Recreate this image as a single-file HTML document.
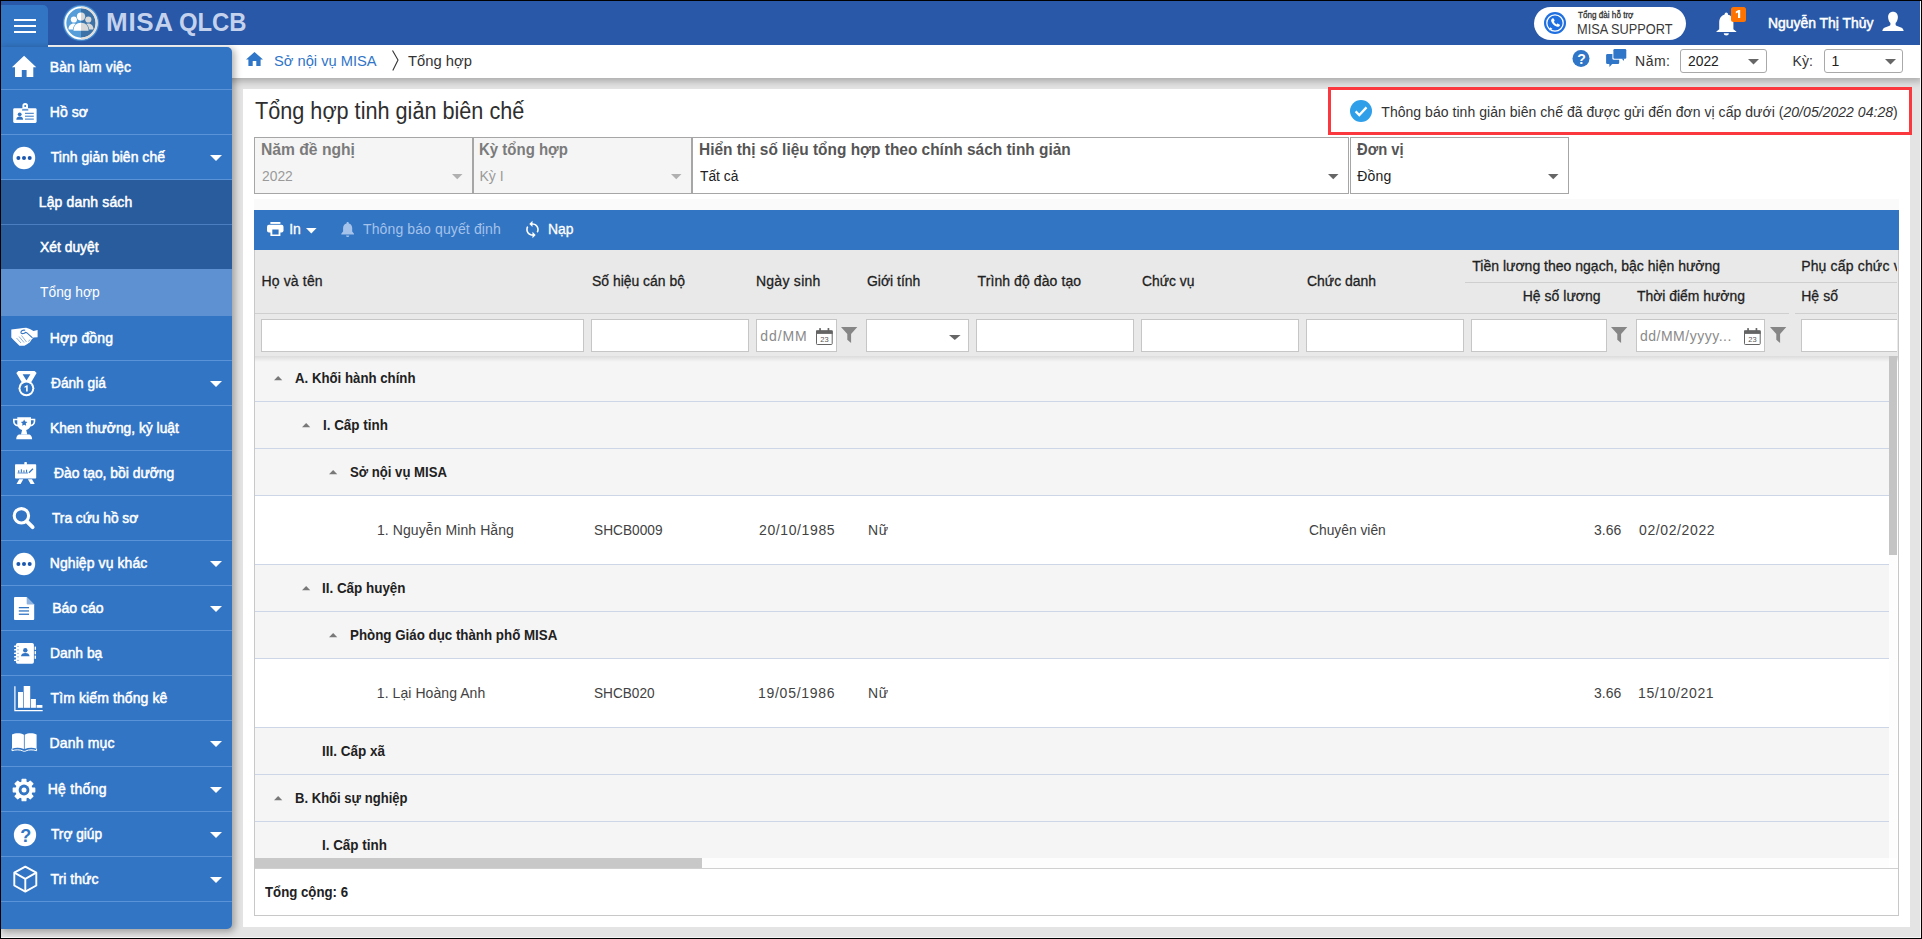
<!DOCTYPE html>
<html lang="vi"><head><meta charset="utf-8"><title>MISA QLCB</title>
<style>
html,body{margin:0;padding:0;}
body{width:1922px;height:939px;overflow:hidden;background:#e4e4e4;position:relative;font-family:"Liberation Sans", sans-serif;}
.a{position:absolute;display:block;}
.t{position:absolute;white-space:nowrap;line-height:20px;transform-origin:0 0;font-family:"Liberation Sans", sans-serif;}
svg{overflow:visible;}
</style></head>
<body>
<div class="a" style="left:1px;top:45px;width:1920px;height:33px;background:#fff;box-shadow:0 1px 8px 2px rgba(0,0,0,.28);"></div>
<div class="a" style="left:1px;top:1px;width:1920px;height:44px;background:#2858a7;"></div>
<div class="a" style="left:1px;top:5px;width:47px;height:42px;background:#3275c4;border-radius:0 5px 0 0;"></div>
<div class="a" style="left:14px;top:19px;width:22px;height:2px;background:#fff;"></div>
<div class="a" style="left:14px;top:25px;width:22px;height:2px;background:#fff;"></div>
<div class="a" style="left:14px;top:31px;width:22px;height:2px;background:#fff;"></div>
<svg class="a" style="left:63.4px;top:4.6px;" width="36" height="36" viewBox="0 0 36 36">
<defs><clipPath id="lc"><circle cx="18" cy="18" r="15"/></clipPath>
<radialGradient id="lg" cx="18" cy="18" r="18.600" gradientUnits="userSpaceOnUse"><stop offset=".9" stop-color="#5fa8e6"/><stop offset="1" stop-color="#4f9bdc" stop-opacity="0.1"/></radialGradient></defs>
<circle cx="18" cy="18" r="18.600" fill="url(#lg)"/>
<g clip-path="url(#lc)">
<rect x="0" y="0" width="18" height="36" fill="#559ed9"/>
<rect x="18" y="0" width="18" height="36" fill="#4887c4"/>
<g fill="#fff">
<circle cx="10.900" cy="14.500" r="3.100"/><circle cx="25.300" cy="14.500" r="3.100"/>
<path d="M5.500 24.500c0-3.700 2.200-5.900 5.300-5.900 1 0 1.900.2 2.600.7-1.700 1.300-2.700 3-3 5.200z"/>
<path d="M30.500 24.500c0-3.700-2.200-5.900-5.300-5.900-1 0-1.900.2-2.600.7 1.700 1.300 2.700 3 3 5.200z"/>
</g>
<circle cx="18" cy="11.600" r="4.700" fill="#559ed9"/>
<circle cx="18" cy="11.600" r="4.100" fill="#fff"/>
<path d="M9.800 25.700c0-5.300 3.300-8.500 8.200-8.500s8.200 3.200 8.200 8.500z" fill="#559ed9"/>
<path d="M10.500 25.700c0-5 3-7.900 7.500-7.900s7.500 2.900 7.500 7.900z" fill="#fff"/>
<rect x="18" y="0" width="18" height="36" fill="#000" opacity=".15"/>
</g>
<circle cx="18" cy="18" r="15.600" fill="none" stroke="#fff" stroke-width="1.900"/>
<path d="M18 2.400A15.600 15.600 0 0 1 18 33.600" fill="none" stroke="#e2ddd8" stroke-width="1.900"/>
</svg>
<span class="t" style="left:106.1px;top:12px;font-size:26px;font-weight:700;color:#c4d2ed;letter-spacing:0.66px;">MISA</span>
<span class="t" style="left:179.48px;top:12px;font-size:26px;font-weight:700;color:#c4d2ed;transform:scaleX(0.9168);">QLCB</span>
<div class="a" style="left:1534px;top:7px;width:152px;height:33px;background:#fff;border-radius:17px;"></div>
<svg class="a" style="left:1543px;top:11px;" width="24" height="24" viewBox="0 0 24 24">
<circle cx="12" cy="12" r="11" fill="#1f6fe0"/>
<circle cx="12" cy="12" r="8.200" fill="none" stroke="#fff" stroke-width="1.300"/>
<path d="M6.200 19.500l1-3.200 2.400 1.600z" fill="#fff"/>
<path d="M9.300 7.600c.5-.5 1.100-.4 1.400.1l.8 1.400c.2.400.1.800-.2 1.100l-.5.500c.6 1.200 1.500 2.100 2.700 2.700l.5-.5c.3-.3.700-.4 1.100-.2l1.400.8c.5.300.6.900.1 1.400-.8.900-1.900 1.100-3 .7-2.500-.9-4.500-2.900-5.400-5.400-.3-1 .2-1.800 1.100-2.600z" fill="#fff"/>
</svg>
<span class="t" style="left:1577.64px;top:5px;font-size:9px;-webkit-text-stroke:0.3px;color:#333;transform:scaleX(0.9024);">Tổng đài hỗ trợ</span>
<span class="t" style="left:1576.99px;top:19px;font-size:14px;color:#3a3a3a;transform:scaleX(0.9125);">MISA SUPPORT</span>
<svg class="a" style="left:1716px;top:12px;" width="21" height="24" viewBox="0 0 21 24">
<circle cx="10.300" cy="2.300" r="1.700" fill="#fff"/>
<path d="M3.200 17.200V10.700C3.200 5.600 6 2.600 10.300 2.600S17.400 5.600 17.400 10.700V17.200L20.300 19.500V20.100H.4V19.500z" fill="#fff"/>
<path d="M7.700 21.300H12.900A2.600 2.200 0 0 1 7.700 21.300z" fill="#fff"/>
</svg>
<div class="a" style="left:1731px;top:7px;width:15px;height:15px;background:#ff7300;border-radius:2.500px;"></div>
<svg class="a" style="left:1735px;top:9px;" width="6" height="10" viewBox="0 0 6 10"><path d="M3.400 1H5.200V9H3V3.600L.8 4.400V2.600z" fill="#fff"/></svg>
<span class="t" style="left:1767.55px;top:13px;font-size:14px;-webkit-text-stroke:0.5px;color:#fff;transform:scaleX(0.9943);">Nguyễn Thị Thủy</span>
<svg class="a" style="left:1882px;top:11px;" width="22" height="21" viewBox="0 0 22 21">
<path d="M11 .8c3 0 4.900 2.200 4.900 5.300 0 2.600-1 4.800-2.300 5.900v1.600c0 .5.300.9.800 1.100l4.600 1.800c1.700.700 2.500 1.900 2.700 3.500H.300c.2-1.600 1-2.800 2.700-3.500l4.600-1.800c.5-.2.800-.6.800-1.100V12c-1.300-1.100-2.300-3.300-2.300-5.900C6.100 3 8 .8 11 .8z" fill="#fff"/>
</svg>
<svg class="a" style="left:246px;top:52px;" width="17" height="14" viewBox="0 0 17 14"><path d="M8.500 0L17 7.600h-2.400V14H10.300V9H6.700v5H2.400V7.600H0z" fill="#2f75c8"/></svg>
<span class="t" style="left:274px;top:51px;font-size:15px;color:#2f75c8;transform:scaleX(0.9783);">Sở nội vụ MISA</span>
<svg class="a" style="left:391px;top:50px;" width="9" height="21" viewBox="0 0 9 21"><path d="M1.500 .5L7 10 1.800 20.500" fill="none" stroke="#333" stroke-width="1.100"/></svg>
<span class="t" style="left:407.5px;top:51px;font-size:15px;color:#333;transform:scaleX(0.9840);">Tổng hợp</span>
<svg class="a" style="left:1572px;top:50px;" width="18" height="18" viewBox="0 0 18 18"><circle cx="9" cy="8.500" r="8.500" fill="#2f75c8"/></svg>
<span class="t" style="left:1577.3px;top:49px;font-size:14px;font-weight:700;color:#fff;">?</span>
<svg class="a" style="left:1606px;top:49px;" width="21" height="19" viewBox="0 0 21 19">
<rect x=".1" y="5" width="13.100" height="10" rx="1.300" fill="#2f75c8"/>
<path d="M3.300 14.800H6.400L3.500 18z" fill="#2f75c8"/>
<rect x="6.400" y="-1" width="15" height="11.800" rx="1.500" fill="#fff"/>
<path d="M15 9.500H18.500V13z" fill="#fff"/>
<rect x="7.400" y="0" width="12.900" height="9.800" rx="1.300" fill="#2f75c8"/>
<path d="M15.600 9.600H18V12.100z" fill="#2f75c8"/>
</svg>
<span class="t" style="left:1635.1px;top:51px;font-size:14px;color:#333;letter-spacing:0.48px;">Năm:</span>
<div class="a" style="left:1680px;top:49px;width:87px;height:24px;background:#fff;border:1px solid #a9a9a9;border-radius:3px;box-sizing:border-box;"></div>
<span class="t" style="left:1688px;top:51px;font-size:14px;color:#212121;transform:scaleX(0.9886);">2022</span>
<svg class="a" style="left:1748px;top:59px;" width="11" height="5.5" viewBox="0 0 11 5.5"><path d="M0 0H11L5.5 5.5Z" fill="#666"/></svg>
<span class="t" style="left:1792.6px;top:51px;font-size:14px;color:#333;letter-spacing:0.03px;">Kỳ:</span>
<div class="a" style="left:1824px;top:49px;width:79px;height:24px;background:#fff;border:1px solid #a9a9a9;border-radius:3px;box-sizing:border-box;"></div>
<span class="t" style="left:1831.6px;top:51px;font-size:14px;color:#212121;">1</span>
<svg class="a" style="left:1884.5px;top:59px;" width="11" height="5.5" viewBox="0 0 11 5.5"><path d="M0 0H11L5.5 5.5Z" fill="#666"/></svg>
<div class="a" style="left:1px;top:47px;width:231px;height:882px;background:#3275c4;border-radius:0 5px 5px 0;box-shadow:2px 2px 7px 1px rgba(0,0,0,.3);"></div>
<div class="a" style="left:1px;top:180px;width:231px;height:89px;background:#285c9c;"></div>
<div class="a" style="left:1px;top:269px;width:231px;height:47px;background:#5d91d2;"></div>
<div class="a" style="left:1px;top:89px;width:231px;height:1px;background:#5b93d8;"></div>
<div class="a" style="left:1px;top:134px;width:231px;height:1px;background:#5b93d8;"></div>
<div class="a" style="left:1px;top:179px;width:231px;height:1px;background:#5b93d8;"></div>
<div class="a" style="left:1px;top:224px;width:231px;height:1px;background:#4a7ec0;"></div>
<div class="a" style="left:1px;top:360px;width:231px;height:1px;background:#5b93d8;"></div>
<div class="a" style="left:1px;top:405px;width:231px;height:1px;background:#5b93d8;"></div>
<div class="a" style="left:1px;top:450px;width:231px;height:1px;background:#5b93d8;"></div>
<div class="a" style="left:1px;top:495px;width:231px;height:1px;background:#5b93d8;"></div>
<div class="a" style="left:1px;top:540px;width:231px;height:1px;background:#5b93d8;"></div>
<div class="a" style="left:1px;top:585px;width:231px;height:1px;background:#5b93d8;"></div>
<div class="a" style="left:1px;top:630px;width:231px;height:1px;background:#5b93d8;"></div>
<div class="a" style="left:1px;top:675px;width:231px;height:1px;background:#5b93d8;"></div>
<div class="a" style="left:1px;top:720px;width:231px;height:1px;background:#5b93d8;"></div>
<div class="a" style="left:1px;top:766px;width:231px;height:1px;background:#5b93d8;"></div>
<div class="a" style="left:1px;top:811px;width:231px;height:1px;background:#5b93d8;"></div>
<div class="a" style="left:1px;top:856px;width:231px;height:1px;background:#5b93d8;"></div>
<div class="a" style="left:1px;top:901px;width:231px;height:1px;background:#5b93d8;"></div>
<span class="t" style="left:49.75px;top:57px;font-size:14px;-webkit-text-stroke:0.5px;color:#fff;letter-spacing:0.1px;">Bàn làm việc</span>
<span class="t" style="left:49.75px;top:102px;font-size:14px;-webkit-text-stroke:0.5px;color:#fff;letter-spacing:0.05px;">Hồ sơ</span>
<span class="t" style="left:50.75px;top:147px;font-size:14px;-webkit-text-stroke:0.5px;color:#fff;letter-spacing:0.02px;">Tinh giản biên chế</span>
<span class="t" style="left:38.75px;top:192px;font-size:14px;-webkit-text-stroke:0.5px;color:#fff;letter-spacing:0.14px;">Lập danh sách</span>
<span class="t" style="left:39.75px;top:237px;font-size:14px;-webkit-text-stroke:0.5px;color:#fff;transform:scaleX(0.9906);">Xét duyệt</span>
<span class="t" style="left:39.5px;top:282px;font-size:14px;color:#fff;transform:scaleX(0.9874);">Tổng hợp</span>
<span class="t" style="left:49.75px;top:328px;font-size:14px;-webkit-text-stroke:0.5px;color:#fff;letter-spacing:0.17px;">Hợp đồng</span>
<span class="t" style="left:50.74px;top:373px;font-size:14px;-webkit-text-stroke:0.5px;color:#fff;transform:scaleX(0.9779);">Đánh giá</span>
<span class="t" style="left:49.76px;top:418px;font-size:14px;-webkit-text-stroke:0.5px;color:#fff;transform:scaleX(0.9867);">Khen thưởng, kỷ luật</span>
<span class="t" style="left:53.75px;top:463px;font-size:14px;-webkit-text-stroke:0.5px;color:#fff;transform:scaleX(0.9916);">Đào tạo, bồi dưỡng</span>
<span class="t" style="left:51.74px;top:508px;font-size:14px;-webkit-text-stroke:0.5px;color:#fff;transform:scaleX(0.9787);">Tra cứu hồ sơ</span>
<span class="t" style="left:49.75px;top:553px;font-size:14px;-webkit-text-stroke:0.5px;color:#fff;letter-spacing:0.08px;">Nghiệp vụ khác</span>
<span class="t" style="left:52.25px;top:598px;font-size:14px;-webkit-text-stroke:0.5px;color:#fff;">Báo cáo</span>
<span class="t" style="left:49.56px;top:643px;font-size:14px;-webkit-text-stroke:0.5px;color:#fff;transform:scaleX(0.9878);">Danh bạ</span>
<span class="t" style="left:50.55px;top:688px;font-size:14px;-webkit-text-stroke:0.5px;color:#fff;letter-spacing:0.1px;">Tìm kiếm thống kê</span>
<span class="t" style="left:49.55px;top:733px;font-size:14px;-webkit-text-stroke:0.5px;color:#fff;letter-spacing:0.17px;">Danh mục</span>
<span class="t" style="left:47.65px;top:779px;font-size:14px;-webkit-text-stroke:0.5px;color:#fff;letter-spacing:0.3px;">Hệ thống</span>
<span class="t" style="left:50.54px;top:824px;font-size:14px;-webkit-text-stroke:0.5px;color:#fff;transform:scaleX(0.9764);">Trợ giúp</span>
<span class="t" style="left:50.55px;top:869px;font-size:14px;-webkit-text-stroke:0.5px;color:#fff;letter-spacing:0.02px;">Tri thức</span>
<svg class="a" style="left:209.5px;top:154.5px;" width="12" height="6" viewBox="0 0 12 6"><path d="M0 0H12L6.0 6Z" fill="#fff"/></svg>
<svg class="a" style="left:209.5px;top:380.5px;" width="12" height="6" viewBox="0 0 12 6"><path d="M0 0H12L6.0 6Z" fill="#fff"/></svg>
<svg class="a" style="left:209.5px;top:560.5px;" width="12" height="6" viewBox="0 0 12 6"><path d="M0 0H12L6.0 6Z" fill="#fff"/></svg>
<svg class="a" style="left:209.5px;top:605.5px;" width="12" height="6" viewBox="0 0 12 6"><path d="M0 0H12L6.0 6Z" fill="#fff"/></svg>
<svg class="a" style="left:209.5px;top:740.5px;" width="12" height="6" viewBox="0 0 12 6"><path d="M0 0H12L6.0 6Z" fill="#fff"/></svg>
<svg class="a" style="left:209.5px;top:786.5px;" width="12" height="6" viewBox="0 0 12 6"><path d="M0 0H12L6.0 6Z" fill="#fff"/></svg>
<svg class="a" style="left:209.5px;top:831.5px;" width="12" height="6" viewBox="0 0 12 6"><path d="M0 0H12L6.0 6Z" fill="#fff"/></svg>
<svg class="a" style="left:209.5px;top:876.5px;" width="12" height="6" viewBox="0 0 12 6"><path d="M0 0H12L6.0 6Z" fill="#fff"/></svg>
<svg class="a" style="left:12px;top:56px;" width="24" height="21" viewBox="0 0 24 21"><path d="M12.100 -.2L24.300 11.300H21.300V20.900H14.600V14H9.800V20.900H3V11.300H-.1z" fill="#fff"/></svg>
<svg class="a" style="left:13px;top:103px;" width="24" height="20" viewBox="0 0 24 20">
<path d="M9.400 5.500V2.700a2.800 2.800 0 0 1 5.600 0V5.500z" fill="#fff"/><circle cx="12.200" cy="2.900" r="1" fill="#3275c4"/>
<rect x=".2" y="5.200" width="23.400" height="14.700" rx="1.300" fill="#fff"/>
<g fill="#3275c4"><rect x="9" y="6.300" width="6.400" height="1.200" rx=".6"/>
<circle cx="6.700" cy="11.300" r="1.900"/><path d="M3.300 16.800c0-2.200 1.500-3.300 3.400-3.300s3.400 1.100 3.400 3.300z"/>
<rect x="12" y="9.800" width="8.800" height="1"/><rect x="12" y="12.700" width="8.800" height="1"/><rect x="12" y="15.600" width="8.800" height="1"/></g>
</svg>
<svg class="a" style="left:12px;top:145.8px;" width="24" height="24" viewBox="0 0 24 24"><circle cx="12" cy="12" r="11.200" fill="#fff"/><g fill="#1b57ae"><circle cx="6.400" cy="12" r="2"/><circle cx="12" cy="12" r="2"/><circle cx="17.700" cy="12" r="2"/></g></svg>
<svg class="a" style="left:12px;top:551.8px;" width="24" height="24" viewBox="0 0 24 24"><circle cx="12" cy="12" r="11.200" fill="#fff"/><g fill="#1b57ae"><circle cx="6.400" cy="12" r="2"/><circle cx="12" cy="12" r="2"/><circle cx="17.700" cy="12" r="2"/></g></svg>
<svg class="a" style="left:11px;top:327px;" width="27" height="20" viewBox="0 0 27 20">
<path d="M.3 2.500L8.500 1.600 12 .9 15.200 .7 18.900 2 22.500 3.900 26.600 3V10.200L22.500 10.600 20.700 12.500 18.900 15.200 16 17.300 13.400 18.800H8.500L2.600 12.900 .3 10.600z" fill="#fff"/>
<path d="M9.800 5.800C10 3.900 12 2.600 14.200 3.300M9.800 5.800c1.500 1.300 3.500.9 4.600-.4l1.300.3 5.800 5.200" fill="none" stroke="#3275c4" stroke-width="1.100"/>
<path d="M5.500 11l4.500 5M8 9.500l5 6M10.500 8.500l5 6.500M19 12.500l-1.500 2" fill="none" stroke="#3275c4" stroke-width=".7" opacity=".8"/>
</svg>
<svg class="a" style="left:16px;top:371px;" width="21" height="26" viewBox="0 0 21 26">
<path d="M.3 2L2.300 .1H18.600L20.600 2 14.300 12.800H6.700z" fill="#fff"/>
<path d="M6.600 3.300H14.400L10.500 9.600z" fill="#3275c4"/>
<circle cx="10.400" cy="17.300" r="7.900" fill="#fff"/><circle cx="10.400" cy="17.300" r="5.900" fill="#3275c4"/>
<path d="M8.600 15.500L10.900 14.200H11.700V20.500H10.100V16.100L8.600 16.900z" fill="#fff"/>
</svg>
<svg class="a" style="left:13px;top:417px;" width="22.3" height="22.3" viewBox="0 0 22.3 22.3">
<path d="M4.300 .2H18V1.700H22.300V4.300c0 2.900-2 4.900-4.900 5.300-.9 1.700-2.300 2.900-4.200 3.400L14.300 17.400H8L9.100 13c-1.900-.5-3.300-1.700-4.200-3.400C2 9.200 0 7.200 0 4.300V1.700H4.300z" fill="#fff"/>
<path d="M5.800 17.600H16.500c1.700.8 2.500 2.400 2.600 4.600H3.200c.1-2.200.9-3.800 2.600-4.600z" fill="#fff"/>
<path d="M1.600 3.300H4.300V7.700C2.700 7.300 1.600 6 1.600 4.300zM20.700 3.300H18V7.700c1.600-.4 2.700-1.700 2.700-3.400z" fill="#3275c4"/>
<path d="M11.150 2.500l1 2.100 2.300.3-1.700 1.600.4 2.300-2-1.100-2 1.100.4-2.300-1.700-1.600 2.300-.3z" fill="#3275c4"/>
</svg>
<svg class="a" style="left:14.8px;top:461.7px;" width="21.2" height="22.2" viewBox="0 0 21.2 22.2">
<rect x="9.300" y="0" width="2.600" height="3" rx=".8" fill="#fff"/>
<rect x="0" y="2.200" width="21.200" height="14.400" rx=".8" fill="#fff"/>
<path d="M4.200 17.200H8.300L5.600 22.100H1.500zM12.900 17.200h4.100L19.700 22.100h-4.100z" fill="#fff"/>
<g fill="#3275c4"><rect x="3.200" y="8.300" width="1.100" height="2.300"/><rect x="5.800" y="7.300" width="1.100" height="3.300"/><rect x="8.400" y="8.300" width="1.100" height="2.300"/><rect x="11" y="7.700" width="1.100" height="2.900"/><path d="M13.500 10.300l4-4 .9.900-4 4z"/><rect x="2.500" y="10.600" width="10.500" height=".8"/></g>
</svg>
<svg class="a" style="left:12px;top:507px;" width="23" height="23" viewBox="0 0 23 23"><circle cx="9.400" cy="8.800" r="7.200" fill="none" stroke="#fff" stroke-width="3.100"/><path d="M14.800 14.300l5.800 5.800" stroke="#fff" stroke-width="3.900" stroke-linecap="round"/></svg>
<svg class="a" style="left:13.9px;top:596.9px;" width="20.2" height="23" viewBox="0 0 20.2 23">
<path d="M1 0H12.700L20.200 7.500V22a1 1 0 0 1-1 1H1a1 1 0 0 1-1-1V1a1 1 0 0 1 1-1z" fill="#fff"/>
<path d="M12.700 0V6.500a1 1 0 0 0 1 1H20.200z" fill="#3275c4" opacity=".55"/>
<g fill="#3275c4"><rect x="4.800" y="10" width="10.200" height="1.300"/><rect x="4.800" y="13.300" width="10.200" height="1.300"/><rect x="4.800" y="16.600" width="10.200" height="1.300"/></g>
</svg>
<svg class="a" style="left:13.9px;top:642.9px;" width="22" height="21" viewBox="0 0 22 21">
<rect x="1.900" y="0" width="18" height="20.800" rx="1.800" fill="#fff"/>
<g fill="#fff"><rect x="0" y="2.600" width="3.500" height="1.500" rx=".7"/><rect x="0" y="6.100" width="3.500" height="1.500" rx=".7"/><rect x="0" y="9.600" width="3.500" height="1.500" rx=".7"/><rect x="0" y="13.100" width="3.500" height="1.500" rx=".7"/><rect x="0" y="16.600" width="3.500" height="1.500" rx=".7"/>
<rect x="20.600" y="3.600" width="1.400" height="3.200"/><rect x="20.600" y="8.100" width="1.400" height="3.200"/><rect x="20.600" y="12.600" width="1.400" height="3.200"/></g>
<g fill="#3275c4"><rect x="3.500" y="2.900" width="1" height=".9"/><rect x="3.500" y="6.400" width="1" height=".9"/><rect x="3.500" y="9.900" width="1" height=".9"/><rect x="3.500" y="13.400" width="1" height=".9"/><rect x="3.500" y="16.900" width="1" height=".9"/>
<circle cx="11.300" cy="7.300" r="2.200"/><path d="M7 13.300c0-2.300 1.900-3.400 4.300-3.400s4.300 1.100 4.300 3.400z"/></g>
</svg>
<svg class="a" style="left:14px;top:685px;" width="29" height="27" viewBox="0 0 29 27">
<path d="M.9 1.300V25.700H28.700" fill="none" stroke="#fff" stroke-width="1.200"/>
<g fill="#fff"><rect x="4" y="7" width="5" height="15.800"/><rect x="9.700" y="1" width="6.500" height="21.800"/><rect x="16.900" y="14" width="5" height="8.800"/><rect x="22.600" y="20" width="5.800" height="2.800"/></g>
</svg>
<svg class="a" style="left:11.5px;top:733px;" width="24.6" height="18.6" viewBox="0 0 24.6 18.6">
<path d="M0 1.600C3.500 -.3 8.300 -.2 11.900 1.700V16C8.300 14.600 3.500 14.500 0 15.700z" fill="#fff"/>
<path d="M24.600 1.600C21.100 -.3 16.300 -.2 12.700 1.700V16c3.600-1.400 8.400-1.500 11.900-.3z" fill="#fff"/>
<path d="M0 15.700V17.700C3.500 16.500 8 16.600 10.500 17.800c.8.700 2.800.7 3.600 0 2.500-1.200 7-1.300 10.500-.1V15.700" fill="none" stroke="#fff" stroke-width="1"/>
</svg>
<svg class="a" style="left:12px;top:778px;" width="24" height="24" viewBox="0 0 24 24"><path d="M9.99 4.15L10.13 1.26L13.87 1.26L14.01 4.15L16.12 5.03L18.27 3.08L20.92 5.73L18.97 7.88L19.85 9.99L22.74 10.13L22.74 13.87L19.85 14.01L18.97 16.12L20.92 18.27L18.27 20.92L16.12 18.97L14.01 19.85L13.87 22.74L10.13 22.74L9.99 19.85L7.88 18.97L5.73 20.92L3.08 18.27L5.03 16.12L4.15 14.01L1.26 13.87L1.26 10.13L4.15 9.99L5.03 7.88L3.08 5.73L5.73 3.08L7.88 5.03Z" fill="#fff" stroke="#fff" stroke-width="1.200" stroke-linejoin="round"/><circle cx="12" cy="12" r="5.400" fill="#3275c4"/><circle cx="12" cy="12" r="2.500" fill="#fff"/></svg>
<svg class="a" style="left:13px;top:823px;" width="24" height="24" viewBox="0 0 24 24"><circle cx="12" cy="12" r="11.150" fill="#fff"/></svg>
<span class="t" style="left:20.2px;top:826px;font-size:18px;font-weight:700;color:#3275c4;">?</span>
<svg class="a" style="left:13px;top:866px;" width="24" height="27" viewBox="0 0 24 27">
<path d="M12.300 .6L23.300 6.700V19.500L12.300 25.600 1.300 19.500V6.700z" fill="none" stroke="#fff" stroke-width="1.900" stroke-linejoin="round"/>
<path d="M1.300 6.700l11 6.100 11-6.100M12.300 12.800V25.600" fill="none" stroke="#fff" stroke-width="1.900" stroke-linejoin="round"/>
</svg>
<div class="a" style="left:243px;top:89px;width:1667px;height:838px;background:#fff;"></div>
<span class="t" style="left:254.5px;top:101px;font-size:23px;color:#2e2e2e;transform:scaleX(0.9410);">Tổng hợp tinh giản biên chế</span>
<svg class="a" style="left:1350px;top:100px;" width="22" height="22" viewBox="0 0 22 22"><circle cx="11" cy="11" r="11" fill="#2f9fea"/><path d="M5.600 11.400l3.700 3.600 7.200-7.600" fill="none" stroke="#fff" stroke-width="2.300"/></svg>
<span class="t" style="left:1381.3px;top:102px;font-size:14px;color:#333;letter-spacing:0.04px;">Thông báo tinh giản biên chế đã được gửi đến đơn vị cấp dưới (<i>20/05/2022 04:28</i>)</span>
<div class="a" style="left:254px;top:137px;width:219px;height:57px;background:#f5f5f5;box-sizing:border-box;border:1px solid #a6a6a6;"></div>
<div class="a" style="left:473px;top:137px;width:219px;height:57px;background:#f5f5f5;box-sizing:border-box;border:1px solid #a6a6a6;"></div>
<div class="a" style="left:692px;top:137px;width:657px;height:57px;background:#fff;box-sizing:border-box;border:1px solid #a6a6a6;"></div>
<div class="a" style="left:1350px;top:137px;width:219px;height:57px;background:#fff;box-sizing:border-box;border:1px solid #a6a6a6;"></div>
<span class="t" style="left:260.62px;top:140px;font-size:16px;font-weight:700;color:#7b7b7b;transform:scaleX(0.9782);">Năm đề nghị</span>
<span class="t" style="left:261.6px;top:166px;font-size:14px;color:#9a9a9a;transform:scaleX(0.9886);">2022</span>
<svg class="a" style="left:452.3px;top:174px;" width="10.5" height="5.2" viewBox="0 0 10.5 5.2"><path d="M0 0H10.5L5.25 5.2Z" fill="#b0b0b0"/></svg>
<span class="t" style="left:479.46px;top:140px;font-size:16px;font-weight:700;color:#7b7b7b;transform:scaleX(0.9369);">Kỳ tổng hợp</span>
<span class="t" style="left:479.4px;top:166px;font-size:14px;color:#9a9a9a;letter-spacing:0.02px;">Kỳ I</span>
<svg class="a" style="left:671.3px;top:174px;" width="10.5" height="5.2" viewBox="0 0 10.5 5.2"><path d="M0 0H10.5L5.25 5.2Z" fill="#b0b0b0"/></svg>
<span class="t" style="left:699.04px;top:140px;font-size:16px;font-weight:700;color:#555;transform:scaleX(0.9640);">Hiển thị số liệu tổng hợp theo chính sách tinh giản</span>
<span class="t" style="left:700px;top:166px;font-size:14px;color:#212121;transform:scaleX(0.9868);">Tất cả</span>
<svg class="a" style="left:1328px;top:174px;" width="10.5" height="5.2" viewBox="0 0 10.5 5.2"><path d="M0 0H10.5L5.25 5.2Z" fill="#666"/></svg>
<span class="t" style="left:1357.3px;top:140px;font-size:16px;font-weight:700;color:#555;transform:scaleX(0.9231);">Đơn vị</span>
<span class="t" style="left:1357.3px;top:166px;font-size:14px;color:#212121;letter-spacing:0.21px;">Đồng</span>
<svg class="a" style="left:1548px;top:174px;" width="10.5" height="5.2" viewBox="0 0 10.5 5.2"><path d="M0 0H10.5L5.25 5.2Z" fill="#666"/></svg>
<div class="a" style="left:254px;top:199px;width:1645px;height:11px;background:#fafafa;"></div>
<div class="a" style="left:254px;top:210px;width:1645px;height:40px;background:#3275c3;"></div>
<div class="a" style="left:254px;top:250px;width:1645px;height:106px;background:#e9e9e9;"></div>
<div class="a" style="left:254px;top:356px;width:1645px;height:512px;background:#fff;"></div>
<svg class="a" style="left:267px;top:222px;" width="17" height="15" viewBox="0 0 17 15">
<rect x="3.400" y="0" width="10" height="1.900" fill="#fff"/>
<rect x="0" y="2.800" width="16.500" height="7.800" rx="2" fill="#fff"/>
<rect x="3.400" y="6.900" width="10" height="7.100" fill="#fff"/>
<rect x="5.300" y="7.500" width="6.300" height="5" fill="#3275c3"/>
</svg>
<span class="t" style="left:289.15px;top:219px;font-size:14px;-webkit-text-stroke:0.3px;color:#fff;letter-spacing:0.01px;">In</span>
<svg class="a" style="left:305.6px;top:228.3px;" width="10.6" height="5.5" viewBox="0 0 10.6 5.5"><path d="M0 0H10.6L5.3 5.5Z" fill="#fff"/></svg>
<svg class="a" style="left:341px;top:222px;" width="14" height="16" viewBox="0 0 14 16"><path transform="scale(.95 .96)" d="M7 0c.7 0 1.200.5 1.200 1.100v.4c2.200.5 3.600 2.400 3.600 4.800v3.700l1.900 2.200v.7H.300v-.7l1.900-2.200V6.300c0-2.400 1.400-4.300 3.600-4.800v-.4C5.800.5 6.300 0 7 0zM5.300 14h3.400a1.700 1.600 0 0 1-3.400 0z" fill="#a4c2ea"/></svg>
<span class="t" style="left:363px;top:219px;font-size:14px;color:#a4c2ea;letter-spacing:0.12px;">Thông báo quyết định</span>
<svg class="a" style="left:522.8px;top:220.2px;" width="19" height="19" viewBox="0 0 19 19"><path transform="scale(.79)" d="M12 4V1L8 5l4 4V6c3.310 0 6 2.690 6 6 0 1.010-.25 1.970-.7 2.800l1.460 1.460C19.540 15.030 20 13.570 20 12c0-4.420-3.580-8-8-8zm0 14c-3.310 0-6-2.690-6-6 0-1.010.25-1.970.7-2.800L5.240 7.740C4.460 8.970 4 10.430 4 12c0 4.420 3.580 8 8 8v3l4-4-4-4v3z" fill="#fff"/></svg>
<span class="t" style="left:547.86px;top:219px;font-size:14px;-webkit-text-stroke:0.3px;color:#fff;transform:scaleX(0.9922);">Nạp</span>
<span class="t" style="left:261.44px;top:271px;font-size:14px;-webkit-text-stroke:0.28px;color:#212121;letter-spacing:0.16px;">Họ và tên</span>
<span class="t" style="left:592.14px;top:271px;font-size:14px;-webkit-text-stroke:0.28px;color:#212121;transform:scaleX(0.9947);">Số hiệu cán bộ</span>
<span class="t" style="left:755.94px;top:271px;font-size:14px;-webkit-text-stroke:0.28px;color:#212121;letter-spacing:0.27px;">Ngày sinh</span>
<span class="t" style="left:867.04px;top:271px;font-size:14px;-webkit-text-stroke:0.28px;color:#212121;transform:scaleX(0.9957);">Giới tính</span>
<span class="t" style="left:977.54px;top:271px;font-size:14px;-webkit-text-stroke:0.28px;color:#212121;letter-spacing:0.09px;">Trình độ đào tạo</span>
<span class="t" style="left:1142.04px;top:271px;font-size:14px;-webkit-text-stroke:0.28px;color:#212121;transform:scaleX(0.9897);">Chức vụ</span>
<span class="t" style="left:1306.84px;top:271px;font-size:14px;-webkit-text-stroke:0.28px;color:#212121;transform:scaleX(0.9957);">Chức danh</span>
<span class="t" style="left:1472.24px;top:256px;font-size:14px;-webkit-text-stroke:0.28px;color:#212121;letter-spacing:0.01px;">Tiền lương theo ngạch, bậc hiện hưởng</span>
<span class="t" style="left:1522.64px;top:286px;font-size:14px;-webkit-text-stroke:0.28px;color:#212121;letter-spacing:0.03px;">Hệ số lương</span>
<span class="t" style="left:1637.44px;top:286px;font-size:14px;-webkit-text-stroke:0.28px;color:#212121;transform:scaleX(0.9930);">Thời điểm hưởng</span>
<div class="a" style="left:1794px;top:250px;width:103px;height:106px;overflow:hidden;" id="clipcol">
<span class="t" style="left:7.14px;top:6px;font-size:14px;-webkit-text-stroke:0.28px;color:#212121;letter-spacing:0.17px;">Phụ cấp chức vụ</span>
<span class="t" style="left:7.14px;top:36px;font-size:14px;-webkit-text-stroke:0.28px;color:#212121;letter-spacing:0.08px;">Hệ số</span>
<div class="a" style="left:7px;top:69px;width:160px;height:33px;background:#fff;border:1px solid #c6c6c6;box-sizing:border-box;"></div>
</div>
<div class="a" style="left:1465px;top:282px;width:432px;height:1px;background:#cfcfcf;"></div>
<div class="a" style="left:254px;top:313px;width:1535px;height:1px;background:#cfcfcf;"></div>
<div class="a" style="left:1795px;top:313px;width:102px;height:1px;background:#cfcfcf;"></div>
<div class="a" style="left:261px;top:319px;width:323px;height:33px;background:#fff;box-sizing:border-box;border:1px solid #c6c6c6;"></div>
<div class="a" style="left:591px;top:319px;width:158px;height:33px;background:#fff;box-sizing:border-box;border:1px solid #c6c6c6;"></div>
<div class="a" style="left:756px;top:319px;width:81px;height:33px;background:#fff;box-sizing:border-box;border:1px solid #c6c6c6;"></div>
<div class="a" style="left:866px;top:319px;width:103px;height:33px;background:#fff;box-sizing:border-box;border:1px solid #c6c6c6;"></div>
<div class="a" style="left:976px;top:319px;width:158px;height:33px;background:#fff;box-sizing:border-box;border:1px solid #c6c6c6;"></div>
<div class="a" style="left:1141px;top:319px;width:158px;height:33px;background:#fff;box-sizing:border-box;border:1px solid #c6c6c6;"></div>
<div class="a" style="left:1306px;top:319px;width:158px;height:33px;background:#fff;box-sizing:border-box;border:1px solid #c6c6c6;"></div>
<div class="a" style="left:1471px;top:319px;width:136px;height:33px;background:#fff;box-sizing:border-box;border:1px solid #c6c6c6;"></div>
<div class="a" style="left:1636px;top:319px;width:129px;height:33px;background:#fff;box-sizing:border-box;border:1px solid #c6c6c6;"></div>
<span class="t" style="left:760.3px;top:326px;font-size:14px;color:#8a8a8a;letter-spacing:0.89px;">dd/MM</span>
<span class="t" style="left:1640px;top:326px;font-size:14px;color:#8a8a8a;letter-spacing:0.5px;">dd/MM/yyyy...</span>
<svg class="a" style="left:816.1px;top:328px;" width="17" height="17" viewBox="0 0 17 17">
<rect x="0.500" y="2.900" width="15.700" height="13.600" rx=".8" fill="#fff" stroke="#646464" stroke-width="1"/>
<rect x="0" y="2.400" width="16.700" height="3.500" fill="#646464"/>
<g fill="#646464"><rect x="3.200" y="0" width="1.700" height="3.600" rx=".6"/><rect x="11.600" y="0" width="1.700" height="3.600" rx=".6"/></g>
<text x="8.400" y="14.300" font-family="Liberation Sans" font-size="7.500" text-anchor="middle" fill="#555">23</text>
</svg>
<svg class="a" style="left:1743.6px;top:328px;" width="17" height="17" viewBox="0 0 17 17">
<rect x="0.500" y="2.900" width="15.700" height="13.600" rx=".8" fill="#fff" stroke="#646464" stroke-width="1"/>
<rect x="0" y="2.400" width="16.700" height="3.500" fill="#646464"/>
<g fill="#646464"><rect x="3.200" y="0" width="1.700" height="3.600" rx=".6"/><rect x="11.600" y="0" width="1.700" height="3.600" rx=".6"/></g>
<text x="8.400" y="14.300" font-family="Liberation Sans" font-size="7.500" text-anchor="middle" fill="#555">23</text>
</svg>
<svg class="a" style="left:841px;top:327.1px;" width="17" height="17" viewBox="0 0 17 17"><path d="M0 0H16.300L10.100 7V16.100L6.300 12.700V7z" fill="#868686"/></svg>
<svg class="a" style="left:1611.3px;top:327.1px;" width="17" height="17" viewBox="0 0 17 17"><path d="M0 0H16.300L10.100 7V16.100L6.300 12.700V7z" fill="#868686"/></svg>
<svg class="a" style="left:1769.8px;top:327.1px;" width="17" height="17" viewBox="0 0 17 17"><path d="M0 0H16.300L10.100 7V16.100L6.300 12.700V7z" fill="#868686"/></svg>
<svg class="a" style="left:949.3px;top:335px;" width="11.6" height="5" viewBox="0 0 11.6 5"><path d="M0 0H11.6L5.8 5Z" fill="#666"/></svg>
<div class="a" style="left:254px;top:356px;width:1645px;height:6px;background:linear-gradient(rgba(0,0,0,.13),rgba(0,0,0,0));"></div>
<div class="a" style="left:255px;top:356px;width:1634px;height:45px;background:#f5f5f5;"></div>
<div class="a" style="left:255px;top:401px;width:1634px;height:1px;background:#ccd6e6;"></div>
<div class="a" style="left:255px;top:402px;width:1634px;height:46px;background:#f5f5f5;"></div>
<div class="a" style="left:255px;top:448px;width:1634px;height:1px;background:#ccd6e6;"></div>
<div class="a" style="left:255px;top:449px;width:1634px;height:46px;background:#f5f5f5;"></div>
<div class="a" style="left:255px;top:495px;width:1634px;height:1px;background:#ccd6e6;"></div>
<div class="a" style="left:255px;top:496px;width:1634px;height:68px;background:#fff;"></div>
<div class="a" style="left:255px;top:564px;width:1634px;height:1px;background:#ccd6e6;"></div>
<div class="a" style="left:255px;top:565px;width:1634px;height:46px;background:#f5f5f5;"></div>
<div class="a" style="left:255px;top:611px;width:1634px;height:1px;background:#ccd6e6;"></div>
<div class="a" style="left:255px;top:612px;width:1634px;height:46px;background:#f5f5f5;"></div>
<div class="a" style="left:255px;top:658px;width:1634px;height:1px;background:#ccd6e6;"></div>
<div class="a" style="left:255px;top:659px;width:1634px;height:68px;background:#fff;"></div>
<div class="a" style="left:255px;top:727px;width:1634px;height:1px;background:#ccd6e6;"></div>
<div class="a" style="left:255px;top:728px;width:1634px;height:46px;background:#f5f5f5;"></div>
<div class="a" style="left:255px;top:774px;width:1634px;height:1px;background:#ccd6e6;"></div>
<div class="a" style="left:255px;top:775px;width:1634px;height:46px;background:#f5f5f5;"></div>
<div class="a" style="left:255px;top:821px;width:1634px;height:1px;background:#ccd6e6;"></div>
<div class="a" style="left:255px;top:822px;width:1634px;height:36px;background:#f5f5f5;"></div>
<div class="a" style="left:254px;top:356px;width:1645px;height:6px;background:linear-gradient(rgba(0,0,0,.10),rgba(0,0,0,0));"></div>
<span class="t" style="left:295px;top:368px;font-size:14px;font-weight:700;color:#212121;transform:scaleX(0.9449);">A. Khối hành chính</span>
<svg class="a" style="left:273.9px;top:375.8px;" width="8.3" height="4.2" viewBox="0 0 8.3 4.2"><path d="M0 4.2H8.3L4.15 0Z" fill="#787878"/></svg>
<span class="t" style="left:322.7px;top:415px;font-size:14px;font-weight:700;color:#212121;transform:scaleX(0.9581);">I. Cấp tỉnh</span>
<svg class="a" style="left:301.9px;top:422.8px;" width="8.3" height="4.2" viewBox="0 0 8.3 4.2"><path d="M0 4.2H8.3L4.15 0Z" fill="#787878"/></svg>
<span class="t" style="left:350.2px;top:462px;font-size:14px;font-weight:700;color:#212121;transform:scaleX(0.9382);">Sở nội vụ MISA</span>
<svg class="a" style="left:328.9px;top:469.8px;" width="8.3" height="4.2" viewBox="0 0 8.3 4.2"><path d="M0 4.2H8.3L4.15 0Z" fill="#787878"/></svg>
<span class="t" style="left:322.4px;top:578px;font-size:14px;font-weight:700;color:#212121;transform:scaleX(0.9587);">II. Cấp huyện</span>
<svg class="a" style="left:301.9px;top:585.8px;" width="8.3" height="4.2" viewBox="0 0 8.3 4.2"><path d="M0 4.2H8.3L4.15 0Z" fill="#787878"/></svg>
<span class="t" style="left:350px;top:625px;font-size:14px;font-weight:700;color:#212121;transform:scaleX(0.9520);">Phòng Giáo dục thành phố MISA</span>
<svg class="a" style="left:328.9px;top:632.8px;" width="8.3" height="4.2" viewBox="0 0 8.3 4.2"><path d="M0 4.2H8.3L4.15 0Z" fill="#787878"/></svg>
<span class="t" style="left:322.4px;top:741px;font-size:14px;font-weight:700;color:#212121;transform:scaleX(0.9653);">III. Cấp xã</span>
<span class="t" style="left:295px;top:788px;font-size:14px;font-weight:700;color:#212121;transform:scaleX(0.9331);">B. Khối sự nghiệp</span>
<svg class="a" style="left:273.9px;top:795.8px;" width="8.3" height="4.2" viewBox="0 0 8.3 4.2"><path d="M0 4.2H8.3L4.15 0Z" fill="#787878"/></svg>
<span class="t" style="left:322.4px;top:835px;font-size:14px;font-weight:700;color:#212121;transform:scaleX(0.9581);">I. Cấp tỉnh</span>
<span class="t" style="left:377px;top:520px;font-size:14px;color:#424242;letter-spacing:0.08px;">1. Nguyễn Minh Hằng</span>
<span class="t" style="left:593.8px;top:520px;font-size:14px;color:#424242;transform:scaleX(0.9779);">SHCB0009</span>
<span class="t" style="left:759px;top:520px;font-size:14px;color:#424242;letter-spacing:0.61px;">20/10/1985</span>
<span class="t" style="left:868px;top:520px;font-size:14px;color:#424242;letter-spacing:0.59px;">Nữ</span>
<span class="t" style="left:1309px;top:520px;font-size:14px;color:#424242;transform:scaleX(0.9865);">Chuyên viên</span>
<span class="t" style="left:1593.6px;top:520px;font-size:14px;color:#424242;transform:scaleX(0.9977);">3.66</span>
<span class="t" style="left:1639px;top:520px;font-size:14px;color:#424242;letter-spacing:0.61px;">02/02/2022</span>
<span class="t" style="left:376.8px;top:683px;font-size:14px;color:#424242;letter-spacing:0.07px;">1. Lại Hoàng Anh</span>
<span class="t" style="left:593.8px;top:683px;font-size:14px;color:#424242;transform:scaleX(0.9733);">SHCB020</span>
<span class="t" style="left:758px;top:683px;font-size:14px;color:#424242;letter-spacing:0.72px;">19/05/1986</span>
<span class="t" style="left:868px;top:683px;font-size:14px;color:#424242;letter-spacing:0.59px;">Nữ</span>
<span class="t" style="left:1593.6px;top:683px;font-size:14px;color:#424242;transform:scaleX(0.9977);">3.66</span>
<span class="t" style="left:1638px;top:683px;font-size:14px;color:#424242;letter-spacing:0.61px;">15/10/2021</span>
<div class="a" style="left:1889px;top:356px;width:8px;height:502px;background:#fdfdfd;"></div>
<div class="a" style="left:1889px;top:356px;width:8px;height:199px;background:#c4c4c4;"></div>
<div class="a" style="left:255px;top:858px;width:1642px;height:10px;background:#fdfdfd;"></div>
<div class="a" style="left:255px;top:858px;width:447px;height:10px;background:#c8c8c8;"></div>
<div class="a" style="left:1889px;top:858px;width:10px;height:10px;background:#fff;"></div>
<div class="a" style="left:254px;top:868px;width:1645px;height:1px;background:#d0d0d0;"></div>
<span class="t" style="left:264.5px;top:882px;font-size:14px;font-weight:700;color:#212121;transform:scaleX(0.9445);">Tổng cộng: 6</span>
<div class="a" style="left:254px;top:250px;width:1px;height:666px;background:#c8c8c8;"></div>
<div class="a" style="left:1898px;top:250px;width:1px;height:666px;background:#c8c8c8;"></div>
<div class="a" style="left:254px;top:915px;width:1645px;height:1px;background:#c8c8c8;"></div>
<div class="a" style="left:1328px;top:87px;width:584px;height:48px;box-sizing:border-box;border:3px solid #fb383e;"></div>
<div class="a" style="left:1920px;top:1px;width:1px;height:937px;background:#f6f6f6;"></div>
<div class="a" style="left:1px;top:937px;width:1920px;height:1px;background:#f6f6f6;"></div>
<div class="a" style="left:0px;top:0px;width:1922px;height:939px;box-sizing:border-box;border:1px solid #000;"></div>
</body></html>
